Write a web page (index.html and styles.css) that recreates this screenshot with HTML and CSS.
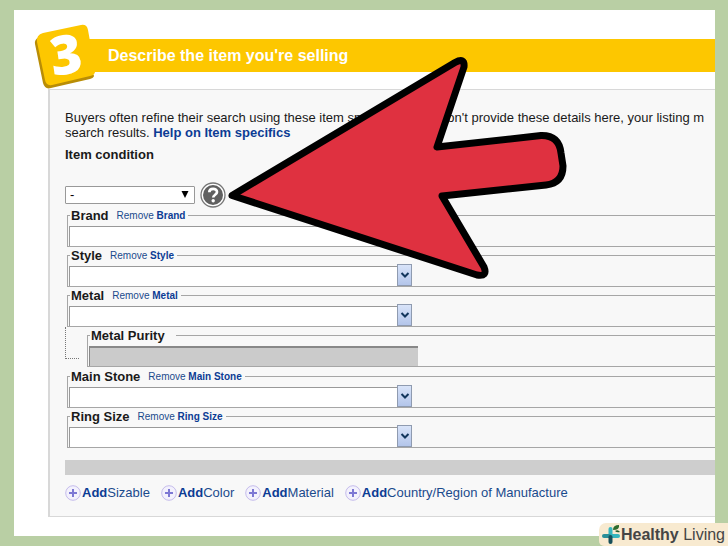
FILE: index.html
```html
<!DOCTYPE html>
<html lang="en">
<head>
    <meta charset="UTF-8">
    <meta name="viewport" content="width=device-width, initial-scale=1.0">
    <title>Describe the item you're selling</title>
    <link rel="stylesheet" href="styles.css">
</head>
<body>

    <main class="sheet">
        <header class="banner">
            <svg class="step" viewBox="0 0 64 68" width="64" height="68" role="img" aria-label="Step 3">
                <path d="M6 15 L12 12 L60 52 Q63 55 57 57 L18 66 Q12 68 10 61 L2 22 Q1 18 6 15Z" fill="#b98d06"/>
                <path d="M10 11 L48 3 Q54 2 55 8 L62 47 Q63 53 57 54 L19 63 Q13 64 12 58 L4 20 Q3 13 10 11Z" fill="#fdc700"/>
                <text class="step-number" x="33" y="52" text-anchor="middle" transform="rotate(-8 33 33)">3</text>
            </svg>
            <h1>Describe the item you're selling</h1>
        </header>

        <form class="panel">
            <p class="intro">Buyers often refine their search using these item specifics. If you don't provide these details here, your listing m<br>
            search results. <a href="#"><b>Help on Item specifics</b></a></p>

            <label class="condition-label" for="condition">Item condition</label>
            <div class="condition">
                <div class="select-wrap">
                    <select id="condition" name="condition">
                        <option>-</option>
                    </select>
                    <svg class="select-arrow" viewBox="0 0 8 7" width="8" height="7"><path d="M0.500 0H7.500L4 7Z"/></svg>
                </div>
                <button type="button" class="help" aria-label="Help">
                    <svg viewBox="0 0 26 26" width="26" height="26">
                        <circle cx="13" cy="13" r="12" fill="#fff" stroke="#777" stroke-width="1.3"/>
                        <circle cx="13" cy="13" r="10" fill="#606060"/>
                        <path d="M9.3 10.3C9.3 5.800 17 5.800 17 10C17 12.800 13.200 12.700 13.200 15.600" fill="none" stroke="#fff" stroke-width="2.700"/>
                        <circle cx="13.200" cy="18.800" r="1.700" fill="#fff"/>
                    </svg>
                </button>
            </div>

            <fieldset class="field">
                <legend><label for="brand">Brand</label><a href="#">Remove <b>Brand</b></a></legend>
                <div class="combo">
                    <input type="text" id="brand" name="brand">
                    <button type="button" aria-label="Show brands"><svg viewBox="0 0 10 8" width="10" height="8"><path d="M1.500 2L5 5.500L8.500 2"/></svg></button>
                </div>
            </fieldset>
            <fieldset class="field">
                <legend><label for="style">Style</label><a href="#">Remove <b>Style</b></a></legend>
                <div class="combo">
                    <input type="text" id="style" name="style">
                    <button type="button" aria-label="Show styles"><svg viewBox="0 0 10 8" width="10" height="8"><path d="M1.500 2L5 5.500L8.500 2"/></svg></button>
                </div>
            </fieldset>
            <fieldset class="field">
                <legend><label for="metal">Metal</label><a href="#">Remove <b>Metal</b></a></legend>
                <div class="combo">
                    <input type="text" id="metal" name="metal">
                    <button type="button" aria-label="Show metals"><svg viewBox="0 0 10 8" width="10" height="8"><path d="M1.500 2L5 5.500L8.500 2"/></svg></button>
                </div>
            </fieldset>
            <div class="sub-field">
                <span class="branch"></span>
                <fieldset class="field">
                    <legend><label for="purity">Metal Purity</label></legend>
                    <div class="combo">
                        <input type="text" id="purity" name="purity" disabled>
                    </div>
                </fieldset>
            </div>
            <fieldset class="field">
                <legend><label for="stone">Main Stone</label><a href="#">Remove <b>Main Stone</b></a></legend>
                <div class="combo">
                    <input type="text" id="stone" name="stone">
                    <button type="button" aria-label="Show stones"><svg viewBox="0 0 10 8" width="10" height="8"><path d="M1.500 2L5 5.500L8.500 2"/></svg></button>
                </div>
            </fieldset>
            <fieldset class="field">
                <legend><label for="size">Ring Size</label><a href="#">Remove <b>Ring Size</b></a></legend>
                <div class="combo">
                    <input type="text" id="size" name="size">
                    <button type="button" aria-label="Show sizes"><svg viewBox="0 0 10 8" width="10" height="8"><path d="M1.500 2L5 5.500L8.500 2"/></svg></button>
                </div>
            </fieldset>

            <div class="divider"></div>

            <nav class="add-links">
                <a href="#"><svg viewBox="0 0 16 16" width="16" height="16"><circle cx="8" cy="8" r="7.300"/><path d="M8 4V12M4 8H12"/></svg><span><b>Add</b>Sizable</span></a>
                <a href="#"><svg viewBox="0 0 16 16" width="16" height="16"><circle cx="8" cy="8" r="7.300"/><path d="M8 4V12M4 8H12"/></svg><span><b>Add</b>Color</span></a>
                <a href="#"><svg viewBox="0 0 16 16" width="16" height="16"><circle cx="8" cy="8" r="7.300"/><path d="M8 4V12M4 8H12"/></svg><span><b>Add</b>Material</span></a>
                <a href="#"><svg viewBox="0 0 16 16" width="16" height="16"><circle cx="8" cy="8" r="7.300"/><path d="M8 4V12M4 8H12"/></svg><span><b>Add</b>Country/Region of Manufacture</span></a>
            </nav>
        </form>
    </main>

    <svg class="pointer" viewBox="0 0 340 226" width="340" height="226" aria-hidden="true">
        <path class="pointer-shape" d="M5 139.500 L228 6.500 Q238 1 237 11 L210 91 L314 79.500 Q332 79 334 97 L336 110 Q336 127 319 129 L215 140 L257 211 Q261 221 250 219 Z"/>
    </svg>

    <div class="brand-tag">
        <svg viewBox="0 0 20 22" width="20" height="22" aria-hidden="true">
            <path d="M9.500 5V11" stroke="#35b5bd" stroke-width="4" stroke-linecap="round"/>
            <path d="M10 12H17" stroke="#35b5bd" stroke-width="4" stroke-linecap="round"/>
            <path d="M3 12H8" stroke="#2b8f98" stroke-width="4" stroke-linecap="round"/>
            <path d="M9.500 13V18" stroke="#174f59" stroke-width="4" stroke-linecap="round"/>
            <path d="M12 6Q12 1 18 1Q19 6 12 6Z" fill="#2f6b2c"/>
            <path d="M14 7Q17 5 19 8Q16 9 14 7Z" fill="#215a2a"/>
        </svg>
        <span><b>Healthy</b> Living</span>
    </div>

</body>
</html>
```
FILE: styles.css
```css
* {
    box-sizing: border-box;
}
body {
    margin: 0;
    padding: 10px 13px 10px 14px;
    background-color: #b9cfa4;
    font-family: "Liberation Sans", Arial, sans-serif;
    font-size: 13px;
    color: #1a1a1a;
    position: relative;
    overflow: hidden;
}
a {
    color: #1a4a8c;
    text-decoration: none;
}
a b {
    color: #0c3c94;
}
.sheet {
    background-color: #fff;
    padding: 29px 0 19px 34px;
}
.banner {
    position: relative;
    display: flex;
    align-items: center;
    height: 33px;
    padding-left: 60px;
    background-color: #fdc700;
}
.banner h1 {
    margin: 0;
    font-size: 16px;
    line-height: 20px;
    color: #fff;
}
.step {
    position: absolute;
    left: -15px;
    top: -17px;
    overflow: visible;
}
.step-number {
    font-family: "Open Sans", sans-serif;
    font-size: 54px;
    font-weight: 800;
    fill: #fff;
}
.panel {
    margin-top: 17px;
    padding: 20px 0 15px 15px;
    background-color: #f8f8f8;
    border: 1px solid #d8d8d8;
    border-right: none;
    border-left-width: 2px;
    overflow: hidden;
}
.intro {
    margin: 0;
    line-height: 15px;
    white-space: nowrap;
}
.condition-label {
    display: block;
    margin-top: 7px;
    line-height: 16px;
    font-weight: bold;
}
.condition {
    display: flex;
    align-items: center;
    gap: 5px;
    height: 26px;
    margin-top: 19px;
}
.select-wrap {
    position: relative;
    width: 130px;
}
.select-wrap select {
    display: block;
    width: 100%;
    height: 18px;
    padding: 0 4px;
    appearance: none;
    background-color: #fff;
    border: 1px solid #999;
    border-radius: 1px;
    font: inherit;
    line-height: 16px;
    color: #000;
}
.select-arrow {
    position: absolute;
    top: 5px;
    right: 6px;
    pointer-events: none;
}
.help {
    padding: 0;
    border: none;
    background: none;
    line-height: 0;
}
.field {
    min-width: 0;
    margin: 0 0 1px 2px;
    padding: 1px 0 0 1px;
    border: 1px solid #a6a6a6;
    border-right: none;
}
.field legend {
    display: flex;
    align-items: center;
    gap: 8px;
    height: 15px;
    margin-left: 1px;
    padding: 0 3px 0 1px;
    line-height: 15px;
}
.field legend label {
    font-weight: bold;
}
.field legend a {
    font-size: 10px;
}
.combo {
    display: flex;
    align-items: flex-end;
    height: 22px;
}
.combo input {
    width: 329px;
    height: 20px;
    padding: 0 4px;
    background-color: #fff;
    border: 1px solid #999;
    border-bottom: none;
    font: inherit;
}
.combo input:disabled {
    background-color: #cbcbcb;
    border-color: #888;
    border-width: 2px 0 0 1px;
}
.combo button {
    display: flex;
    align-items: center;
    justify-content: center;
    width: 15px;
    height: 22px;
    margin-left: -1px;
    padding: 0;
    background: linear-gradient(#d9e4f9, #b3c5ea);
    border: 1px solid #8f9bb0;
}
.combo button path {
    fill: none;
    stroke: #12365c;
    stroke-width: 2;
}
.sub-field {
    display: flex;
    margin: 1px 0;
}
.sub-field .field {
    flex: 1;
    margin-left: 8px;
}
.sub-field legend {
    padding-right: 11px;
}
.branch {
    width: 14px;
    height: 32px;
    margin-top: -1px;
    border-left: 1px dotted #777;
    border-bottom: 1px dotted #777;
}
.divider {
    height: 15px;
    margin: 12px 0 10px;
    background-color: #cecece;
}
.add-links {
    display: flex;
    gap: 11px;
    white-space: nowrap;
}
.add-links a {
    display: flex;
    align-items: center;
    gap: 1px;
    line-height: 16px;
}
.add-links circle {
    fill: #f3f1fc;
    stroke: #c5bcec;
}
.add-links path {
    stroke: #7d78d4;
    stroke-width: 2;
}
.pointer {
    position: absolute;
    left: 227px;
    top: 56px;
    pointer-events: none;
}
.pointer-shape {
    fill: #df3140;
    stroke: #000;
    stroke-width: 7;
    stroke-linejoin: round;
}
.brand-tag {
    position: absolute;
    right: 0;
    bottom: 0;
    display: flex;
    align-items: center;
    height: 23px;
    padding: 0 3px 0 2px;
    background-color: #f8ead0;
    border-radius: 7px 0 0 5px;
    font-size: 16px;
    color: #454545;
    white-space: nowrap;
}
```
